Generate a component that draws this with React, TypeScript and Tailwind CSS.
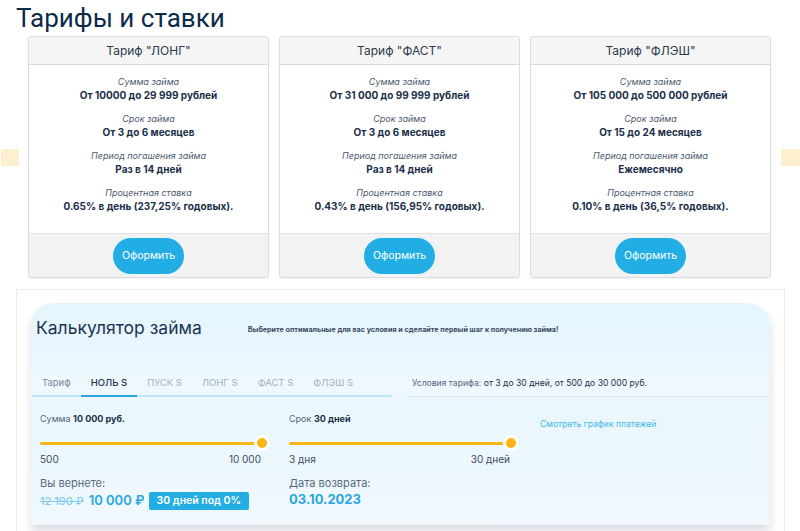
import React from "react";

const tariffs = [
  {
    name: 'Тариф "ЛОНГ"',
    sum: "От 10000 до 29 999 рублей",
    term: "От 3 до 6 месяцев",
    period: "Раз в 14 дней",
    rate: "0.65% в день (237,25% годовых).",
  },
  {
    name: 'Тариф "ФАСТ"',
    sum: "От 31 000 до 99 999 рублей",
    term: "От 3 до 6 месяцев",
    period: "Раз в 14 дней",
    rate: "0.43% в день (156,95% годовых).",
  },
  {
    name: 'Тариф "ФЛЭШ"',
    sum: "От 105 000 до 500 000 рублей",
    term: "От 15 до 24 месяцев",
    period: "Ежемесячно",
    rate: "0.10% в день (36,5% годовых).",
  },
];

const tabs = ["Тариф", "НОЛЬ S", "ПУСК S", "ЛОНГ S", "ФАСТ S", "ФЛЭШ S"];

const Row = ({ label, value }: { label: string; value: string }) => (
  <div className="flex flex-col items-center">
    <div className="text-[9px] leading-[12px] italic text-[#4b5b70]">{label}</div>
    <div className="text-[10px] leading-[14px] font-bold text-[#1b2f4a]">{value}</div>
  </div>
);

const Card = ({ t }: { t: (typeof tariffs)[number] }) => (
  <div className="w-[241px] border border-[#dcdcdc] rounded-[3px] bg-white overflow-hidden shadow-[0_1px_2px_rgba(0,0,0,0.05)]">
    <div className="h-[28px] bg-[#f5f5f5] border-b border-[#dcdcdc] text-center text-[12px] leading-[27px] text-[#2b3a4c]">
      {t.name}
    </div>
    <div className="h-[168px] pt-[11px] flex flex-col gap-[11px]">
      <Row label="Сумма займа" value={t.sum} />
      <Row label="Срок займа" value={t.term} />
      <Row label="Период погашения займа" value={t.period} />
      <Row label="Процентная ставка" value={t.rate} />
    </div>
    <div className="h-[44px] bg-[#f2f2f2] border-t border-[#e2e2e2] flex items-center justify-center">
      <button className="w-[71px] h-[36px] rounded-full bg-[#22aee5] text-white text-[10.5px]">
        Оформить
      </button>
    </div>
  </div>
);

const Slider = ({
  label,
  value,
  min,
  max,
}: {
  label: string;
  value: string;
  min: string;
  max: string;
}) => (
  <div className="w-[221px]">
    <div className="text-[9px] leading-[12px] text-[#55657a]">
      {label} <span className="font-bold text-[#1c2f48]">{value}</span>
    </div>
    <div className="relative h-[16px] mt-[10px]">
      <div className="absolute left-0 right-0 top-[6.5px] h-[3px] bg-[#fbb615] rounded-full" />
      <div className="absolute right-[-9px] top-0 w-[16px] h-[16px] rounded-full bg-[#fbb615] border-[3px] border-white" />
    </div>
    <div className="flex justify-between text-[10px] leading-[14px] text-[#3d4d62] mt-[1px]">
      <span>{min}</span>
      <span>{max}</span>
    </div>
  </div>
);

export default function App() {
  return (
    <div className="w-[800px] h-[531px] overflow-hidden bg-white font-['Inter',sans-serif]">
      <h1 className="pl-[16px] pt-[2px] h-[36px] font-['Roboto',sans-serif] text-[26px] leading-[32px] text-[#0c2b4b]">
        Тарифы и ставки
      </h1>
      <div className="flex items-center pl-[1px]">
        <div className="w-[18px] h-[17px] bg-[#fdf0cf]" />
        <div className="ml-[9px] flex gap-[10px]">
          {tariffs.map((t) => (
            <Card key={t.name} t={t} />
          ))}
        </div>
        <div className="ml-[10px] w-[19px] h-[17px] bg-[#fdf0cf]" />
      </div>
      <div className="mt-[11px] ml-[16px] w-[769px] h-[260px] border border-[#ececec] bg-white pt-[13px] px-[14px]">
        <div className="rounded-t-[22px] bg-gradient-to-b from-[#e6f6fe] to-[#eff8fd] shadow-[0_6px_10px_rgba(40,60,90,0.18)] h-[222px]">
          <div className="h-[67px] flex items-start pt-[14px] pl-[5px]">
            <div className="text-[17.5px] leading-[22px] text-[#1c3553]">Калькулятор займа</div>
            <div className="ml-[46px] mt-[8px] text-[7.2px] font-bold text-[#3b4a60]">
              Выберите оптимальные для вас условия и сделайте первый шаг к получению займа!
            </div>
          </div>
          <div className="flex h-[27px] bg-[#eef8fe] pl-[1px] gap-[16px]">
            <div className="w-[360px] flex border-b-2 border-[#bfe5f8]">
              {tabs.map((tab, i) => (
                <div
                  key={tab}
                  className={
                    i === 1
                      ? "px-[10px] text-[9.5px] leading-[25px] font-medium text-[#1f3550] border-b-2 border-[#2ba7e0] -mb-[2px]"
                      : i === 0
                        ? "px-[10px] text-[9.5px] leading-[25px] text-[#7c8899]"
                        : "px-[10px] text-[9.5px] leading-[25px] text-[#a5b0bd]"
                  }
                >
                  {tab}
                </div>
              ))}
            </div>
            <div className="w-[360px] border-b border-[#dfe7ec] pl-[4px] text-[8.6px] leading-[26px] text-[#55657a]">
              Условия тарифа: <span className="text-[#1f3048]">от 3 до 30 дней, от 500 до 30 000 руб.</span>
            </div>
          </div>
          <div className="flex pl-[9px] pt-[16px]">
            <div className="w-[221px]">
              <Slider label="Сумма" value="10 000 руб." min="500" max="10 000" />
              <div className="mt-[10px] text-[11px] leading-[14px] text-[#5a6a7e]">Вы вернете:</div>
              <div className="flex items-center mt-[1px] whitespace-nowrap">
                <span className="text-[11px] line-through text-[#7fcdf0] font-medium">12 190 ₽</span>
                <span className="ml-[5px] text-[13px] font-semibold text-[#2aa7e0]">10 000 ₽</span>
                <span className="ml-[4px] px-[8px] h-[18px] leading-[18px] rounded-[2px] bg-[#23aee3] text-white text-[10.5px] font-semibold">
                  30 дней под 0%
                </span>
              </div>
            </div>
            <div className="ml-[28px] w-[221px]">
              <Slider label="Срок" value="30 дней" min="3 дня" max="30 дней" />
              <div className="mt-[10px] text-[11px] leading-[14px] text-[#5a6a7e]">Дата возврата:</div>
              <div className="mt-[1px] text-[13px] leading-[17px] font-bold text-[#2aa7e0]">03.10.2023</div>
            </div>
            <div className="ml-[30px] pt-[5px] text-[8.6px] text-[#3db8ea]">Смотреть график платежей</div>
          </div>
        </div>
      </div>
    </div>
  );
}
